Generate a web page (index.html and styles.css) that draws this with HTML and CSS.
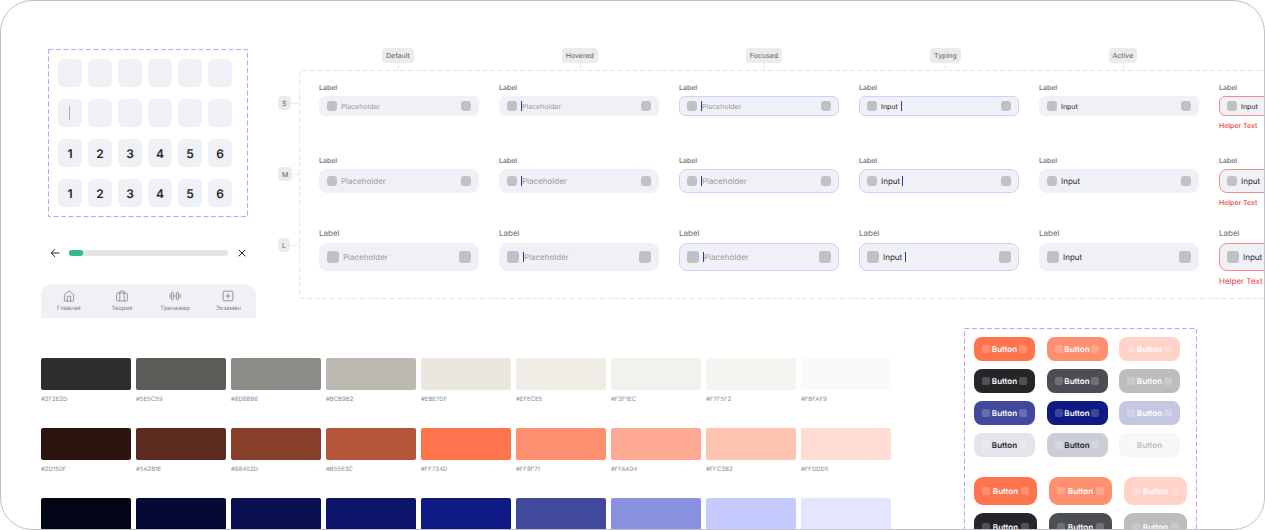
FILE: index.html
```html
<!DOCTYPE html>
<html lang="ru">
<head>
<meta charset="utf-8">
<title>UI Kit</title>
<link rel="stylesheet" href="styles.css">
</head>
<body>
<main class="frame">
  <div class="top">
    <aside class="widgets">
      <section class="codes">
        <svg class="dash" aria-hidden="true"><rect x="0.5" y="0.5"/></svg>
        <div class="code-row" id="code-empty"></div>
        <div class="code-row" id="code-focus"></div>
        <div class="code-row" id="code-filled"></div>
        <div class="code-row" id="code-done"></div>
      </section>
      <div class="progress-row">
        <button class="icon-btn" aria-label="Назад"><svg viewBox="0 0 10 10"><path d="M9.2 5H1.2M5 1.2L1.2 5L5 8.8"/></svg></button>
        <div class="track" role="progressbar" aria-valuenow="9" aria-valuemin="0" aria-valuemax="100"><div class="fill"></div></div>
        <button class="icon-btn" aria-label="Закрыть"><svg viewBox="0 0 10 10"><path d="M1.7 1.7L8.3 8.3M8.3 1.7L1.7 8.3"/></svg></button>
      </div>
      <nav class="tabbar">
        <a class="tab" href="#"><svg viewBox="0 0 12 12"><path d="M1.4 4.6L6 .9L10.6 4.6V10.2Q10.6 11.2 9.6 11.2H2.4Q1.4 11.2 1.4 10.2ZM4.3 11.2V6.2H7.7V11.2"/></svg>Главная</a>
        <a class="tab" href="#"><svg viewBox="0 0 12 12"><rect x=".6" y="3" width="10.8" height="8" rx="1.2"/><path d="M3.8 11V1.9Q3.8 1 4.7 1H7.3Q8.2 1 8.2 1.9V11"/></svg>Теория</a>
        <a class="tab" href="#"><svg viewBox="0 0 12 12"><path d="M4.6 6H7.4"/><rect x="2.6" y="2.2" width="2" height="7.6" rx="1"/><rect x="7.4" y="2.2" width="2" height="7.6" rx="1"/><path d="M2.2 3.9Q.6 4.2 .6 6Q.6 7.8 2.2 8.1M9.8 3.9Q11.4 4.2 11.4 6Q11.4 7.8 9.8 8.1"/></svg>Тренажер</a>
        <a class="tab" href="#"><svg viewBox="0 0 12 12"><rect x="1.2" y="1.2" width="9.6" height="9.6" rx=".8"/><path d="M6 3.6V8.4M3.6 6H8.4"/></svg>Экзамен</a>
      </nav>
    </aside>

    <section class="matrix">
      <div class="states">
        <span class="chip">Default</span><span class="chip">Hovered</span><span class="chip">Focused</span><span class="chip">Typing</span><span class="chip">Active</span>
      </div>
      <div class="matrix-body">
        <div class="sizes"><span class="chip">S</span><span class="chip">M</span><span class="chip">L</span></div>
        <div class="board">
          <svg class="dash" aria-hidden="true"><rect x="0.5" y="0.5" rx="3"/></svg>
          <div class="fields" id="fields"></div>
        </div>
      </div>
    </section>
  </div>

  <div class="bottom">
    <section class="palette" id="palette"></section>
    <section class="buttons">
      <svg class="dash" aria-hidden="true"><rect x="0.5" y="0.5"/></svg>
      <div class="btn-group" id="buttons-s"></div>
      <div class="btn-group large" id="buttons-m"></div>
    </section>
  </div>
</main>
<script src="kit.js"></script>
</body>
</html>
```
FILE: styles.css
```css
* { box-sizing: border-box; }

body {
  margin: 0;
  background: #fff;
  font-family: Inter, "Noto Sans", sans-serif;
  text-rendering: geometricPrecision;
  color: #242629;
}

button, input { font: inherit; color: inherit; border: 0; padding: 0; text-rendering: inherit; }

.frame {
  height: 100vh;
  overflow: hidden;
  border: 1px solid #c2c2c6;
  border-radius: 32px;
  padding-top: 47px;
}

.dash {
  position: absolute;
  inset: 0;
  width: 100%;
  height: 100%;
  pointer-events: none;
}
.dash rect {
  width: calc(100% - 1px);
  height: calc(100% - 1px);
  fill: none;
  stroke: #c49dff;
  stroke-dasharray: 5 2.5;
}

.top { display: flex; gap: 22px; padding-left: 40px; }

/* left column */
.widgets { flex: none; width: 215px; padding-top: 1px; }

.codes {
  position: relative;
  display: flex;
  flex-direction: column;
  gap: 12px;
  width: 200px;
  margin-left: 7px;
  padding: 10px;
}
.code-row { display: flex; gap: 6px; }
.cell { position: relative; display: flex; }
.cell input {
  width: 24px;
  height: 28px;
  border-radius: 6px;
  background: #f0f1f7;
  text-align: center;
  font-size: 12px;
  font-weight: 600;
}
.cell.current::after {
  content: "";
  position: absolute;
  left: 11px;
  top: 7px;
  width: 1px;
  height: 14px;
  background: #a9aab0;
}

.progress-row {
  display: flex;
  align-items: center;
  gap: 9px;
  margin: 31px 9px 0;
}
.icon-btn { display: flex; background: none; }
.icon-btn svg { width: 10px; height: 10px; fill: none; stroke: #242629; stroke-width: 1; }
.track { flex: 1; height: 6px; border-radius: 3px; background: #e4e5ea; }
.fill { width: 9%; height: 6px; border-radius: 3px; background: #33b888; }

.tabbar {
  display: flex;
  margin-top: 26px;
  height: 34px;
  padding: 6px 1px 0;
  border-radius: 12px 12px 0 0;
  background: #f0f1f7;
}
.tab {
  flex: 1;
  display: flex;
  flex-direction: column;
  align-items: center;
  gap: 3px;
  font-size: 6px;
  line-height: 8px;
  color: #7e8087;
  text-decoration: none;
}
.tab svg { width: 12px; height: 12px; fill: none; stroke: #7e8087; stroke-width: .8; }

/* input matrix */
.matrix { flex: none; }
.states { display: flex; gap: 148px; padding-left: 104px; }
.chip {
  position: relative;
  height: 14px;
  padding: 0 4px;
  border-radius: 4px;
  background: #ebebeb;
  font-size: 7px;
  line-height: 15px;
  color: #5c5d61;
}
.chip::after { content: ""; position: absolute; background: #ebebeb; }
.states .chip { height: 15px; line-height: 16px; }
.states .chip::after { left: 50%; top: 15px; width: 1px; height: 7px; }

.matrix-body { display: flex; margin-top: 7px; }
.sizes {
  display: flex;
  flex-direction: column;
  align-items: flex-start;
  gap: 57px;
  width: 21px;
  padding-top: 26px;
}
.sizes .chip::after { left: 100%; top: 7px; width: 7px; height: 1px; }

.board { position: relative; padding: 12px 20px; }
.board .dash rect { stroke: #e4e4e4; }
.fields { display: grid; grid-template-columns: repeat(6, 160px); column-gap: 20px; }

.field {
  display: flex;
  flex-direction: column;
  gap: 3px;
  min-height: 73px;
  padding-top: 1px;
  font-size: 7px;
  line-height: 10px;
}
.field label, .helper { font-size: 7px; }
.helper { padding-top: 1px; }
.field label { color: #66686e; font-weight: 500; }
.helper { color: #f23d3d; font-weight: 500; }

.box {
  display: flex;
  align-items: center;
  height: 20px;
  margin-bottom: 1px;
  padding: 0 7px;
  border: 1px solid #f0f1f7;
  border-radius: 6px;
  background: #f0f1f7;
}
.box input { flex: 1; min-width: 0; height: 12px; background: none; outline: 0; }
.box input::placeholder { color: #999a9f; opacity: 1; }
.slot { flex: none; width: 10px; height: 10px; border-radius: 3px; background: #c0c1c5; }
.slot:first-child { margin-right: 4px; }
.slot:last-child { margin-left: auto; }
.caret { flex: none; width: 1px; height: 10px; background: #2e3899; }

.size-m { font-size: 8px; }
.size-m .box { height: 24px; border-radius: 8px; }
.size-l { gap: 5px; min-height: 59px; padding-top: 0; font-size: 8px; }
.size-l label, .size-l .helper { font-size: 8px; }
.size-l label, .size-l .helper { font-weight: 400; }
.size-l .helper { padding-top: 0; margin-top: -1px; }
.size-l .box { height: 28px; border-radius: 8px; }
.size-l .slot { width: 12px; height: 12px; }

.focused .box, .typing .box { border-color: #cdd0ff; }
.error .box { border-color: #f28b8f; }
.typing .box input { flex: none; width: 21px; }
.size-s.typing .box input { width: 20px; }
.size-l.typing .box input { width: 22px; }

/* palette and buttons */
.bottom {
  display: flex;
  justify-content: space-between;
  align-items: flex-start;
  padding: 10px 67px 0 40px;
}
.palette {
  display: grid;
  grid-template-columns: repeat(9, 90px);
  gap: 22px 5px;
  padding-top: 30px;
}
.swatch { font-size: 6px; line-height: 8px; color: #85868a; }
.swatch-color { height: 32px; margin-bottom: 6px; border-radius: 2px; }
.swatch-name { display: block; height: 10px; }

.buttons {
  position: relative;
  flex: none;
  display: flex;
  flex-direction: column;
  gap: 20px;
  width: 233px;
  padding: 9px 10px;
}
.btn-group {
  display: grid;
  grid-template-columns: repeat(3, 61px);
  justify-content: space-between;
  row-gap: 8px;
  width: 206px;
}
.btn-group.large { grid-template-columns: repeat(3, 63px); width: 213px; }

.btn {
  display: flex;
  align-items: center;
  justify-content: space-between;
  height: 24px;
  padding: 0 8px;
  border-radius: 8px;
  font-size: 8px;
  font-weight: 600;
  color: #fff;
}
.large .btn { height: 28px; border-radius: 9px; }
.btn::before, .btn::after {
  content: "";
  flex: none;
  width: 8px;
  height: 8px;
  border-radius: 2px;
  background: #fff;
  opacity: .2;
}
.orange { background: #ff734d; }
.orange.hover { background: #ff8f71; }
.orange.off { background: #ffd3c8; }
.black { background: #242629; }
.black.hover { background: #4c4e53; }
.black.off { background: #bdbdbe; }
.blue { background: #41499d; }
.blue.hover { background: #101a85; }
.blue.off { background: #c5c7e1; }
.light { background: #e4e5ea; color: #242629; }
.light.hover { background: #cbced6; }
.light.off { background: #f7f7f9; color: #bdbdbe; }
```
FILE: kit.js
```js
const byId = (id) => document.getElementById(id);

function codeRow(id, digits, current) {
  byId(id).innerHTML = Array.from({ length: 6 }, (_, i) =>
    `<span class="cell${i === current ? " current" : ""}"><input maxlength="1" aria-label="${i + 1}" value="${digits[i] || ""}"></span>`
  ).join("");
}
codeRow("code-empty", "");
codeRow("code-focus", "", 0);
codeRow("code-filled", "123456");
codeRow("code-done", "123456");

const caret = '<span class="caret"></span>';
const states = ["default", "hovered", "focused", "typing", "active", "error"];
byId("fields").innerHTML = ["s", "m", "l"].flatMap((size) => states.map((state, i) => {
  const id = `${size}-${state}`;
  const before = state === "hovered" || state === "focused" ? caret : "";
  const after = state === "typing" ? caret : "";
  const text = i < 3 ? 'placeholder="Placeholder"' : 'value="Input"';
  const helper = state === "error" ? '<span class="helper">Helper Text</span>' : "";
  return `<div class="field size-${size} ${state}"><label for="${id}">Label</label>
    <div class="box"><span class="slot"></span>${before}<input id="${id}" ${text}>${after}<span class="slot"></span></div>${helper}</div>`;
})).join("");

const colors = [
  ["#2F2E2D", "#5E5C59", "#8D8B86", "#BCB9B2", "#EBE7DF", "#EFECE5", "#F3F1EC", "#F7F5F2", "#FBFAF9"],
  ["#2D150F", "#5A2B1E", "#88402D", "#B5563C", "#FF734D", "#FF8F71", "#FFAA94", "#FFC3B2", "#FFDDD5"],
  ["#020516", "#050A35", "#0A104F", "#0D156A", "#101A85", "#41499D", "#8A90E0", "#C6CBFF", "#E4E6FF"],
];
byId("palette").innerHTML = colors.flatMap((row, i) => row.map((c) =>
  `<div class="swatch"><div class="swatch-color" style="background:${c}"></div>${i < 2 ? `<span class="swatch-name">${c}</span>` : ""}</div>`
)).join("");

const buttons = (tones) => tones.flatMap((tone) =>
  ["", "hover", "off"].map((mode) =>
    `<button class="btn ${tone} ${mode}"${mode === "off" ? " disabled" : ""}>Button</button>`)
).join("");
byId("buttons-s").innerHTML = buttons(["orange", "black", "blue", "light"]);
byId("buttons-m").innerHTML = buttons(["orange", "black", "blue", "light"]);
```
